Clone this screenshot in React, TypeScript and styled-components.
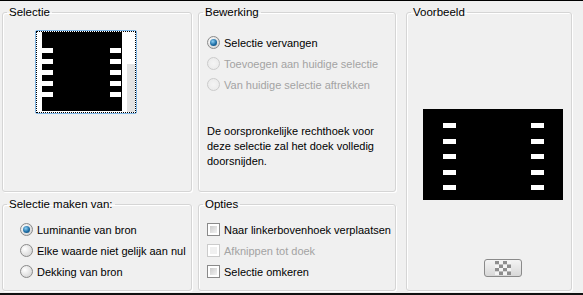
import styled, { createGlobalStyle } from "styled-components"

const Global = createGlobalStyle`
  html, body { margin: 0; padding: 0; background: #f0f0f0; }
  body { font-family: "Liberation Sans", Arial, sans-serif; font-size: 11px; color: #000; }
`

const Frame = styled.div`
  width: 583px;
  height: 295px;
  box-sizing: border-box;
  border-top: 1px solid #000;
  border-bottom: 2px solid #111;
  padding: 4px 0 0 2px;
  display: grid;
  grid-template-columns: 190px 198px 170px;
  grid-template-rows: 187px 94px;
  column-gap: 6px;
  row-gap: 5px;
`

const Group = styled.fieldset<{ $span?: boolean; $w?: number }>`
  margin: 0;
  padding: 0;
  min-width: 0;
  border: 1px solid #d5d5d5;
  border-radius: 3px;
  box-shadow: inset 1px 1px 0 #fff, 1px 1px 0 #fff;
  ${(p) => (p.$span ? "grid-row: 1 / span 2; grid-column: 3;" : "")}
  ${(p) => (p.$w ? `width: ${p.$w}px; justify-self: end; box-sizing: border-box;` : "")}
  display: flex;
  flex-direction: column;
`

const Legend = styled.legend`
  margin-left: 4px;
  padding: 0 2px;
  line-height: 14px;
  font-size: 11.5px;
`

const ThumbBox = styled.div`
  margin: 11px 0 0 32px;
  width: 102px;
  height: 84px;
  box-sizing: border-box;
  border: 1px solid #7fb6e6;
  border-radius: 2px;
  background: #fff;
  display: flex;
`

const Focus = styled.div`
  flex: 1;
  border: 1px dotted #000;
  display: flex;
  padding-left: 5px;
  svg { flex-shrink: 0; }
`

const Strip = styled.div`
  width: 8px;
  flex-shrink: 0;
  background: linear-gradient(to bottom, #fff 0 40%, #e2e2e2 40% 100%);
  border-left: 5px solid #fff;
`

const Option = styled.div<{ $off?: boolean }>`
  display: flex;
  align-items: center;
  height: 21px;
  white-space: nowrap;
  color: ${(p) => (p.$off ? "#a3a3a3" : "#000")};
  gap: 4px;
`

const Radio = styled.span<{ $on?: boolean; $off?: boolean }>`
  width: 13px;
  height: 13px;
  flex-shrink: 0;
  box-sizing: border-box;
  border-radius: 50%;
  border: 1px solid ${(p) => (p.$off ? "#cbcbcb" : "#8a8a8a")};
  background: ${(p) =>
    p.$off
      ? "radial-gradient(circle at 50% 50%, #f4f4f4, #e8e8e8)"
      : "radial-gradient(circle at 35% 35%, #ffffff, #e0e0e0 60%, #cfcfcf)"};
  display: flex;
  align-items: center;
  justify-content: center;
  &::after {
    content: "";
    display: ${(p) => (p.$on ? "block" : "none")};
    width: 7px;
    height: 7px;
    border-radius: 50%;
    background: radial-gradient(circle at 40% 35%, #8fd0f5, #1d6ea5 55%, #0f3e66);
  }
`

const Check = styled.span<{ $off?: boolean }>`
  width: 13px;
  height: 13px;
  flex-shrink: 0;
  box-sizing: border-box;
  border: 1px solid ${(p) => (p.$off ? "#cbcbcb" : "#8a8a8a")};
  background: #fff;
  padding: 2px;
  &::after {
    content: "";
    display: block;
    width: 100%;
    height: 100%;
    background: ${(p) =>
      p.$off ? "#f0f0f0" : "linear-gradient(135deg, #cbcbcb, #f2f2f2)"};
  }
`

const OptionList = styled.div<{ $pl: number; $pt: number }>`
  display: flex;
  flex-direction: column;
  padding: ${(p) => p.$pt}px 0 0 ${(p) => p.$pl}px;
`

const Note = styled.p`
  margin: 29px 0 0 8px;
  line-height: 15px;
  width: 180px;
`

const Preview = styled.div`
  margin: 90px 0 0 16px;
  display: flex;
`

const Button = styled.button`
  margin: 59px 0 0 77px;
  width: 38px;
  height: 18px;
  border: 1px solid #8a8a8a;
  border-radius: 3px;
  background: linear-gradient(to bottom, #f4f4f4, #e6e6e6 50%, #d7d7d7);
  display: flex;
  align-items: center;
  justify-content: center;
  padding: 0;
`

type BarsProps = { w: number; h: number; bw: number; bh: number; left: number; right: number; ys: number[] }

const Bars = ({ w, h, bw, bh, left, right, ys }: BarsProps) => (
  <svg width={w} height={h} style={{ display: "block" }}>
    <rect width={w} height={h} fill="#000" />
    {ys.map((y) => (
      <g key={y}>
        <rect x={left} y={y} width={bw} height={bh} fill="#fff" />
        <rect x={right} y={y} width={bw} height={bh} fill="#fff" />
      </g>
    ))}
  </svg>
)

const Checker = () => (
  <svg width="16" height="14">
    {[0, 1, 2, 3].flatMap((r) =>
      [0, 1, 2, 3].map((c) => (
        <rect key={`${r}${c}`} x={c * 4} y={r * 3.5} width="4" height="3.5" fill={(r + c) % 2 ? "#f4f4f4" : "#8e8e8e"} />
      ))
    )}
  </svg>
)

export default function App() {
  return (
    <>
      <Global />
      <Frame>
        <Group>
          <Legend>Selectie</Legend>
          <ThumbBox>
            <Focus>
              <Bars w={80} h={79} bw={11} bh={5} left={0} right={68} ys={[16, 27, 38, 49, 60]} />
              <Strip />
            </Focus>
          </ThumbBox>
        </Group>

        <Group>
          <Legend>Bewerking</Legend>
          <OptionList $pl={8} $pt={13}>
            <Option><Radio $on />Selectie vervangen</Option>
            <Option $off><Radio $off />Toevoegen aan huidige selectie</Option>
            <Option $off><Radio $off />Van huidige selectie aftrekken</Option>
          </OptionList>
          <Note>De oorspronkelijke rechthoek voor deze selectie zal het doek volledig doorsnijden.</Note>
        </Group>

        <Group $span $w={166}>
          <Legend>Voorbeeld</Legend>
          <Preview>
            <Bars w={140} h={91} bw={13} bh={5} left={20} right={108} ys={[14, 30, 45, 61, 76]} />
          </Preview>
          <Button><Checker /></Button>
        </Group>

        <Group>
          <Legend>Selectie maken van:</Legend>
          <OptionList $pl={17} $pt={8}>
            <Option><Radio $on />Luminantie van bron</Option>
            <Option><Radio />Elke waarde niet gelijk aan nul</Option>
            <Option><Radio />Dekking van bron</Option>
          </OptionList>
        </Group>

        <Group>
          <Legend>Opties</Legend>
          <OptionList $pl={8} $pt={8}>
            <Option><Check />Naar linkerbovenhoek verplaatsen</Option>
            <Option $off><Check $off />Afknippen tot doek</Option>
            <Option><Check />Selectie omkeren</Option>
          </OptionList>
        </Group>
      </Frame>
    </>
  )
}
